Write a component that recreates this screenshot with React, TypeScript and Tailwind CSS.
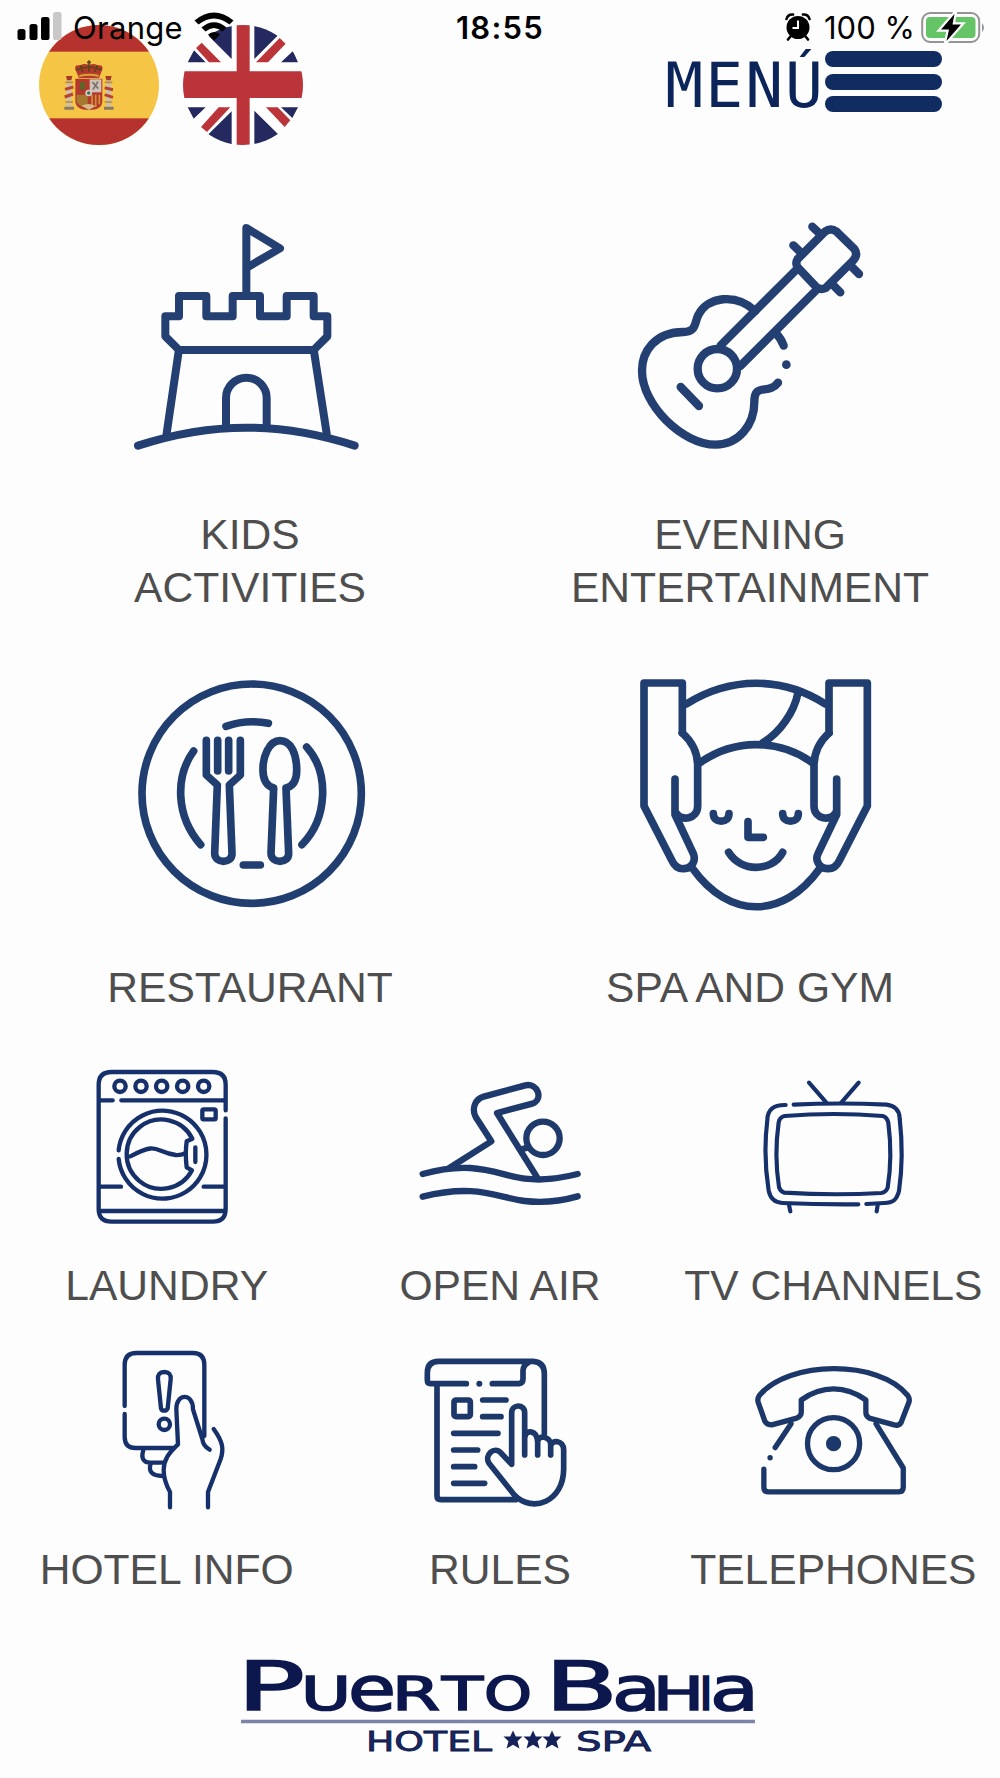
import React from "react";

type IconProps = {
  box: string;
  width: number;
  height: number;
  stroke: number;
  color?: string;
  children: React.ReactNode;
};

function LineIcon({ box, width, height, stroke, color = "#15306a", children }: IconProps) {
  return (
    <svg
      viewBox={box}
      width={width}
      height={height}
      fill="none"
      stroke={color}
      strokeWidth={stroke}
      strokeLinecap="round"
      strokeLinejoin="round"
      className="block shrink-0"
      aria-hidden="true"
    >
      {children}
    </svg>
  );
}

const SOFT = "#243f71";

function Castle() {
  return (
    <LineIcon box="0 0 780 750" width={260} height={250} stroke={24} color={SOFT}>
      <path d="M379 256V54L480 115L382 172" />
      <path d="M177 420L136 379V319H177V258H259V319H338V258H420V319H500V258H581V319H622V379L581 420Z" />
      <path d="M176 424L140 670M582 424L620 670" />
      <path d="M318 648V564a61 61 0 0 1 122 0V648" />
      <path d="M54 707Q218 653 379 653T704 707" />
    </LineIcon>
  );
}

function Guitar() {
  return (
    <LineIcon box="0 0 780 750" width={260} height={250} stroke={25} color={SOFT}>
      <path d="M406 303C347 248 262 260 235 315C223 338 230 366 190 366C105 366 66 425 66 482C66 585 187 704 287 704C355 704 403 646 403 576C403 515 445 557 474 518" />
      <circle cx="292" cy="476" r="59" />
      <path d="M302 406L530 178M361 468L588 241M182 531L237 588" />
      <path d="M467 369Q483 385 491 407" />
      <path d="M615 65L533 147Q525 160 533 172L590 232Q602 241 617 234L700 151Q715 134 703 117L650 65Q632 52 615 65Z" />
      <path d="M577 50L601 73M520 106L545 130M693 168L717 192M638 224L661 247" />
      <circle cx="499" cy="464" r="13" fill={SOFT} stroke="none" />
    </LineIcon>
  );
}

function Plate() {
  return (
    <LineIcon box="0 0 780 780" width={260} height={260} stroke={23} color="#213e70">
      <circle cx="395" cy="401" r="329" />
      <path d="M318 199Q380 177 445 190M221 273C165 350 167 468 242 554M560 261C628 337 624 475 546 554M370 615H421" />
      <path d="M259 241V345L292 375L284 580C284 612 337 612 336 580L328 375L361 345V241M293 241V333M326 241V333" />
      <path d="M461 384L453 580C453 612 507 612 506 580L498 384C526 377 531 350 530 325C529 285 515 242 480 242C446 242 429 292 429 325C428 352 435 376 461 384Z" />
    </LineIcon>
  );
}

function Massage() {
  return (
    <LineIcon box="0 0 780 780" width={260} height={260} stroke={23} color="#213e70">
      <path d="M187 219V69H72V438L155 600C165 623 181 627 192 626C218 625 228 600 220 581L165 464V357" />
      <path d="M187 219Q233 260 233 317V438C233 479 182 483 170 461" />
      <path d="M627 219V69H742V438L659 600C649 623 635 627 622 626C598 625 584 600 594 581L650 464V357" />
      <path d="M627 219Q582 260 582 317V438C582 479 633 483 645 461" />
      <path d="M199 132C330 50 485 48 616 132M243 306C342 238 472 235 574 306M534 98C523 155 480 218 430 247" />
      <path d="M219 627C327 777 489 779 598 627" />
      <path d="M280 461C280 491 327 491 327 461M488 461C488 491 535 491 535 461M384 485V532H430M326 577C362 637 456 637 488 577" />
    </LineIcon>
  );
}

function Washer() {
  return (
    <LineIcon box="5 0 510 570" width={170} height={190} stroke={13}>
      <path d="M436 181V104Q436 66 397 66H94Q55 66 55 104V477Q55 515 94 515H397Q436 515 436 477V205" />
      <path d="M60 151H97M123 151H431M61 410H122M370 410H430M59 483H432" />
      <circle cx="119" cy="109" r="17" />
      <circle cx="182" cy="109" r="17" />
      <circle cx="244" cy="109" r="17" />
      <circle cx="307" cy="109" r="17" />
      <circle cx="370" cy="109" r="17" />
      <rect x="366" y="178" width="40" height="30" rx="4" />
      <path d="M115 301A132 132 0 1 1 115 327" />
      <path d="M336 266A104 104 0 1 0 335 361L319 352Q314 310 319 274L336 266" />
      <path d="M150 319C236 273 221 306 286 315Q302 316 315 310M345 292V336" />
    </LineIcon>
  );
}

function Swimmer() {
  return (
    <LineIcon box="0 0 600 480" width={200} height={160} stroke={19} color="#1e3a6c">
      <path d="M148 324L274 244L227 171C214 144 226 117 251 110L376 76C414 68 431 118 397 131L291 159L410 350" />
      <circle cx="429" cy="235" r="50" />
      <path d="M368 267L382 263M68 342C226 298 291 345 374 356C436 363 480 354 533 342M68 410C226 370 291 412 374 423C436 430 480 424 533 409" />
    </LineIcon>
  );
}

function Television() {
  return (
    <LineIcon box="-5 0 570 510" width={190} height={170} stroke={12.5}>
      <path d="M208 68L260 128M357 68L305 128" />
      <path d="M138 135C101 134 83 150 83 180Q70 285 87 392Q94 427 128 429Q240 434 356 433" />
      <path d="M162 134Q300 127 441 134C467 137 480 154 480 175Q493 290 478 393C470 423 458 428 434 429L380 432" />
      <path d="M135 168Q282 156 429 168Q442 171 446 188Q459 290 444 383Q439 397 425 399Q282 407 134 398Q121 394 118 381Q103 286 117 187Q120 171 135 168Z" />
      <path d="M148 435L152 454M414 435L411 454" />
    </LineIcon>
  );
}

function KeyCard() {
  return (
    <LineIcon box="-23 0 450 600" width={150} height={200} stroke={13}>
      <path d="M75 228V105Q75 69 110 69H280Q314 69 314 105V318M75 252V320Q75 354 108 354H220" />
      <path d="M194 126Q173 126 175 148L184 235Q186 242 194 242Q201 242 204 235L213 148Q215 126 194 126Z" />
      <circle cx="194" cy="283" r="17" />
      <path d="M211 532V486C197 461 192 445 192 420C193 389 206 370 235 343L230 238C229 188 281 188 280 238L308 327Q310 348 330 359M342 297C370 336 373 357 363 387L325 486V532" />
      <path d="M131 361C123 385 132 398 151 398H193M153 401C145 425 158 438 188 438" />
    </LineIcon>
  );
}

function RulesSheet() {
  return (
    <LineIcon box="15 0 570 540" width={190} height={180} stroke={17} color="#1c3769">
      <path d="M199 131H92Q82 131 82 121V98Q82 64 116 64H399Q433 66 433 101V282M277 131H357Q369 130 369 117V91Q371 74 386 67M111 137V468Q111 479 122 479H347" />
      <rect x="162" y="180" width="49" height="50" rx="6" />
      <path d="M248 180H318M248 230H303M161 280H294M161 330H233M161 380H224M161 430H254" />
      <path d="M374 345V218C374 191 335 192 335 218V373L303 339C282 317 252 346 267 370L343 465C398 521 491 485 491 386V329C491 300 455 299 453 316C451 288 414 283 413 306C411 270 379 268 375 290M413 345V300M452 345V310" />
      <circle cx="238" cy="131" r="9" fill="#1c3769" stroke="none" />
    </LineIcon>
  );
}

function Telephone() {
  return (
    <LineIcon box="660 1190 150 150" width={170} height={170} stroke={4.7} color="#1c3769">
      <path d="M670 1231C696 1200 775 1199 801 1231Q803 1234 802 1237L795 1255Q793 1258 789 1257L767 1251Q764 1249 764 1246V1235C746 1222 725 1222 707 1235V1246Q707 1249 703 1251L681 1257Q677 1257 675 1254L669 1237Q668 1234 670 1231Z" />
      <path d="M698 1256L684 1277M674 1296V1312Q674 1316 678 1316H793Q797 1316 797 1312V1295L773 1256" />
      <circle cx="735.5" cy="1273.5" r="23" />
      <circle cx="735.5" cy="1273.5" r="6.7" fill="#1c3769" stroke="none" />
      <circle cx="679.5" cy="1286" r="2.4" fill="#1c3769" stroke="none" />
    </LineIcon>
  );
}

function SpainFlag() {
  return (
    <svg viewBox="116 76 360 360" className="block h-[120px] w-[120px]" aria-label="Español">
      <clipPath id="es">
        <circle cx="296" cy="256" r="180" />
      </clipPath>
      <g clipPath="url(#es)">
        <rect x="116" y="76" width="360" height="360" fill="#f5c646" />
        <rect x="116" y="76" width="360" height="80" fill="#b5322e" />
        <rect x="116" y="356" width="360" height="80" fill="#b5322e" />
      </g>
      <path d="M226 212Q219 194 240 197Q253 190 266 196Q280 190 291 197Q312 194 305 212L296 235H236Z" fill="#b23a2a" />
      <path d="M266 182V196M260 188H272M240 197L247 216M291 197L284 216M266 196V216M227 211Q266 193 304 211" stroke="#5b451b" strokeWidth="5" fill="none" />
      <path d="M237 229Q266 221 295 229" stroke="#d8a437" strokeWidth="6" fill="none" />
      <path d="M225 237H306V305Q306 331 266 331T225 305Z" fill="#b5382e" />
      <path d="M268 239H303V278H268Z" fill="#cfc3b9" />
      <path d="M229 285H262V324Q229 320 229 303Z" fill="#a57930" />
      <path d="M275 285V325M286 285V322M297 285V314" stroke="#cf9130" strokeWidth="5" />
      <path d="M239 247h15v23h-15z" fill="#5c6428" />
      <path d="M276 247l18 20M293 245l-15 25" stroke="#77706d" strokeWidth="5" />
      <circle cx="265" cy="280" r="10" fill="#d9cfb8" />
      <circle cx="265" cy="280" r="5" fill="#426b72" />
      <path d="M243 318Q266 307 286 319L266 331Z" fill="#d4b886" />
      <g fill="#c9bfb4">
        <rect x="199" y="242" width="14" height="78" />
        <rect x="318" y="242" width="14" height="78" />
      </g>
      <path d="M194 269L219 262M193 292L218 283M313 264L338 270M313 285L338 293" stroke="#b6432f" strokeWidth="9" />
      <path d="M197 229h19l-3 13h-13zM315 229h19l-3 13h-13z" fill="#a33b2b" />
      <path d="M195 248h23M313 248h23M195 307h23M313 307h23" stroke="#bd8b2d" strokeWidth="5" />
      <path d="M192 321h29v9h-29zM311 321h29v9h-29z" fill="#877a66" />
    </svg>
  );
}

function UkFlag() {
  return (
    <svg viewBox="548 76 360 360" className="block h-[120px] w-[120px]" aria-label="English">
      <clipPath id="uk">
        <circle cx="728" cy="256" r="180" />
      </clipPath>
      <g clipPath="url(#uk)">
        <rect x="548" y="76" width="360" height="360" fill="#fff" />
        <g fill="#24295f">
          <path d="M694 70V178L614 98ZM562 188L581 152L616 188ZM762 70V178L842 98ZM842 188L878 154L893 188Z" />
          <path d="M562 323H616L580 357ZM694 440V335L618 410ZM762 440V333L842 412ZM842 323H893L876 355Z" />
        </g>
        <g fill="#ba3439">
          <path d="M587 145L604 129L662 188H626ZM838 115L856 132L803 188H767ZM655 323H690L620 397L602 382ZM797 323H832L870 362L853 382Z" />
          <path d="M709 70H748V440H709Z" />
          <path d="M540 215H920V295H540Z" />
        </g>
      </g>
    </svg>
  );
}

function StatusBar() {
  return (
    <div className="absolute inset-x-0 top-0 h-[54px] font-[Inter,sans-serif] text-black">
      <div className="grid h-full grid-cols-3 items-center">
        <div className="flex items-center pl-[17px]">
          <svg width="46" height="30" viewBox="0 0 46 30" className="shrink-0">
            <rect x="0.5" y="17" width="8" height="11" rx="2.6" />
            <rect x="12.5" y="12" width="8" height="16" rx="2.6" />
            <rect x="24" y="5" width="8.500" height="23" rx="2.6" />
            <rect x="36" y="0" width="8.500" height="28" rx="2.6" fill="#c8c8c8" />
          </svg>
          <span className="ml-[10px] text-[31px] leading-none tracking-[0.3px]">Orange</span>
          <svg width="42" height="30" viewBox="0 0 42 30" className="ml-[11px] shrink-0">
            <path d="M0.500 8.500Q20 -7.500 39.500 8.500L35.500 12.500Q20 0.500 4.500 12.500Z" />
            <path d="M7.500 15.500Q20 5 32.500 15.500L28.500 19.500Q20 12.500 11.500 19.500Z" />
            <path d="M14 22.500Q20 17.500 26 22.500L20 28.500Z" />
          </svg>
        </div>
        <div className="text-center text-[31px] font-semibold leading-none tracking-[1.2px]">18:55</div>
        <div className="flex items-center justify-end pr-[15px]">
          <svg width="26" height="28" viewBox="0 0 26 28" className="shrink-0">
            <circle cx="13" cy="14.500" r="11.500" />
            <path d="M1.500 6Q3 1 8 1.500M18 1.500Q23 1 24.500 6M5 24L3 26.500M21 24L23 26.500" stroke="#000" strokeWidth="2.6" fill="none" strokeLinecap="round" />
            <path d="M13 7.500V15H7.500" stroke="#fff" strokeWidth="2" fill="none" />
          </svg>
          <span className="ml-[13px] w-[90px] whitespace-nowrap text-[31px] leading-none tracking-[0px]">100 %</span>
          <svg width="64" height="34" viewBox="0 0 64 34" className="ml-[7px] shrink-0">
            <rect x="1.200" y="3" width="57" height="29" rx="8" fill="#fdfdfd" stroke="#949494" strokeWidth="2" />
            <rect x="5" y="7" width="49.500" height="21" rx="4" fill="#65c466" />
            <path d="M61 13Q65 17.500 61 22Z" fill="#949494" />
            <path d="M33.500 4L20 19.500H28L25.500 31L40 14.500H31.500Z" fill="#000" stroke="#fdfdfd" strokeWidth="4.500" paintOrder="stroke" />
          </svg>
        </div>
      </div>
    </div>
  );
}

function Header() {
  return (
    <header className="relative h-[210px]">
      <div className="flex items-start justify-between pl-[39px] pr-[58px] pt-[25px]">
        <div className="flex gap-6">
          <SpainFlag />
          <UkFlag />
        </div>
        <button className="mt-[26px] flex text-[#0b2459]">
          <span className="mt-[3px] font-['DejaVu_Sans_Mono',monospace] text-[63px] leading-[64px] tracking-[2px]">MENÚ</span>
          <span className="flex w-[117px] flex-col gap-[6.500px]">
            <span className="h-4 rounded-full bg-[#112c60]" />
            <span className="h-4 rounded-full bg-[#112c60]" />
            <span className="h-4 rounded-full bg-[#112c60]" />
          </span>
        </button>
      </div>
      <StatusBar />
    </header>
  );
}

function Tile({ icon, lines, className }: { icon: React.ReactNode; lines: string[]; className: string }) {
  return (
    <a className={"flex flex-col items-center justify-between text-center text-[42.600px] leading-[53px] text-[#4e4e4e] " + className}>
      {icon}
      <span className="whitespace-nowrap">
        {lines.map((line) => (
          <span key={line} className="block">{line}</span>
        ))}
      </span>
    </a>
  );
}

function Star({ x }: { x: number }) {
  return <path transform={`translate(${x} 1740)`} d="M0-9.500L2.800-3.500H9.500L4.500 1.300L6.500 8.500L0 4.800L-6.500 8.500L-4.500 1.300L-9.500-3.500H-2.800Z" fill="#15225a" stroke="none" />;
}

const NAME: { ch: string; x: number; size: number; w: number }[] = [
  { ch: "P", x: 237, size: 67, w: 68 },
  { ch: "U", x: 301, size: 46, w: 50 },
  { ch: "e", x: 348, size: 60, w: 48 },
  { ch: "R", x: 392, size: 46, w: 48 },
  { ch: "T", x: 442, size: 46, w: 41 },
  { ch: "O", x: 484, size: 46, w: 48 },
  { ch: "B", x: 545, size: 67, w: 73 },
  { ch: "a", x: 612, size: 60, w: 49 },
  { ch: "H", x: 653, size: 46, w: 51 },
  { ch: "I", x: 699, size: 46, w: 14 },
  { ch: "a", x: 710, size: 60, w: 49 },
];

function Logo() {
  return (
    <svg viewBox="220 1640 560 130" width="560" height="130" className="mx-auto block" fontFamily="'DejaVu Sans', sans-serif" fill="#0b174d" stroke="#0b174d">
      <g strokeWidth="1.6">
        {NAME.map((l, i) => (
          <text key={i} x={l.x} y="1709.500" fontSize={l.size} textLength={l.w} lengthAdjust="spacingAndGlyphs">
            {l.ch}
          </text>
        ))}
      </g>
      <path d="M241 1721.500H755" stroke="#7c84a8" strokeWidth="3.500" />
      <g strokeWidth="0.800" fontSize="27" fill="#1b285f">
        <text x="366" y="1750.500" textLength="126" lengthAdjust="spacingAndGlyphs">HOTEL</text>
        <text x="576" y="1750.500" textLength="75" lengthAdjust="spacingAndGlyphs">SPA</text>
      </g>
      <Star x={513} />
      <Star x={533} />
      <Star x={552} />
    </svg>
  );
}

export default function App() {
  return (
    <div className="h-[1778px] w-[1000px] overflow-hidden bg-[#fdfdfd] font-['Liberation_Sans',Arial,sans-serif]">
      <Header />
      <main>
        <section className="grid grid-cols-2">
          <Tile icon={<Castle />} lines={["KIDS", "ACTIVITIES"]} className="h-[404px]" />
          <Tile icon={<Guitar />} lines={["EVENING", "ENTERTAINMENT"]} className="h-[404px]" />
          <Tile icon={<Plate />} lines={["RESTAURANT"]} className="mt-[46px] h-[354px]" />
          <Tile icon={<Massage />} lines={["SPA AND GYM"]} className="mt-[46px] h-[354px]" />
        </section>
        <section className="grid grid-cols-3">
          <Tile icon={<Washer />} lines={["LAUNDRY"]} className="mt-[36px] h-[262px]" />
          <Tile icon={<Swimmer />} lines={["OPEN AIR"]} className="mt-[46px] h-[252px]" />
          <Tile icon={<Television />} lines={["TV CHANNELS"]} className="mt-[46px] h-[252px]" />
          <Tile icon={<KeyCard />} lines={["HOTEL INFO"]} className="mt-[18px] h-[266px]" />
          <Tile icon={<RulesSheet />} lines={["RULES"]} className="mt-[28px] h-[256px]" />
          <Tile icon={<Telephone />} lines={["TELEPHONES"]} className="mt-[37px] h-[247px]" />
        </section>
      </main>
      <footer className="mt-[44px]">
        <Logo />
      </footer>
    </div>
  );
}
